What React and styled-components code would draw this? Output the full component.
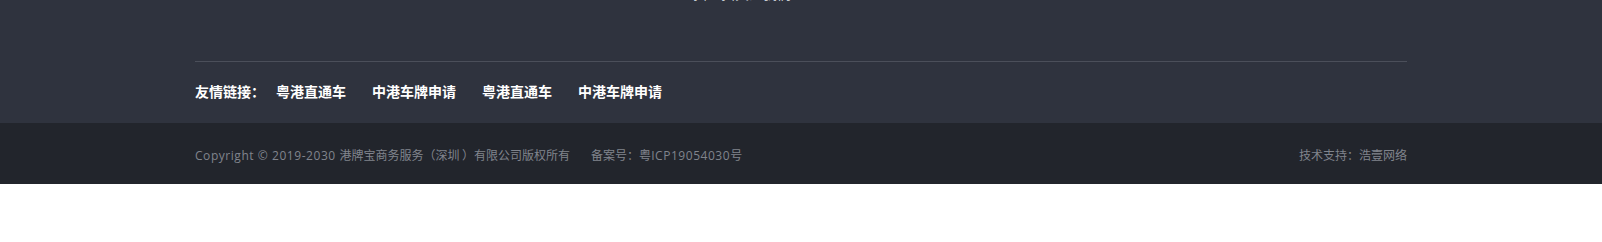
import styled, { createGlobalStyle } from 'styled-components';

const GlobalStyle = createGlobalStyle`
  html, body {
    margin: 0;
    padding: 0;
    background: #ffffff;
    font-family: "Noto Sans CJK SC", "Noto Sans", sans-serif;
  }
`;

const FooterTop = styled.div`
  background: #2f333e;
  overflow: hidden;
`;

const Container = styled.div`
  width: 1212px;
  margin: 0 auto;
`;

const CutLine = styled.div`
  margin-top: -17px;
  margin-bottom: 58px;
  padding-left: 498px;
  height: 20px;
  font-size: 14px;
  line-height: 20px;
  color: #c9ccd3;
`;

const Divider = styled.div`
  border-top: 1px solid #4b4f5a;
`;

const LinksRow = styled.div`
  height: 61px;
  display: flex;
  align-items: center;
  font-size: 14px;
  font-weight: 700;
  color: #ffffff;
  padding-bottom: 3px;
  box-sizing: border-box;
`;

const Label = styled.span`
  margin-right: 11px;
`;

const LinkItem = styled.a`
  color: #ffffff;
  text-decoration: none;
  margin-right: 26px;
`;

const FooterBottom = styled.div`
  background: #22252c;
`;

const BottomRow = styled.div`
  height: 61px;
  display: flex;
  align-items: center;
  justify-content: space-between;
  font-family: "Noto Sans CJK SC", sans-serif;
  font-size: 12px;
  color: #80848d;
  padding-top: 2px;
  box-sizing: border-box;
`;

const Latin = styled.span`
  font-family: "Open Sans", "Noto Sans", sans-serif;
  letter-spacing: 0.55px;
`;

const Left = styled.div`
  display: flex;
  gap: 21px;
`;

const links = ['粤港直通车', '中港车牌申请', '粤港直通车', '中港车牌申请'];

export default function App() {
  return (
    <>
      <GlobalStyle />
      <FooterTop>
        <Container>
          <CutLine>扫一扫关注我们</CutLine>
          <Divider />
          <LinksRow>
            <Label>友情链接：</Label>
            {links.map((l, i) => (
              <LinkItem key={i} href="#">{l}</LinkItem>
            ))}
          </LinksRow>
        </Container>
      </FooterTop>
      <FooterBottom>
        <Container>
          <BottomRow>
            <Left>
              <span><Latin>Copyright © 2019-2030 </Latin>港牌宝商务服务（深圳 ）有限公司版权所有</span>
              <span>备案号：粤<Latin>ICP19054030</Latin>号</span>
            </Left>
            <span>技术支持：浩壹网络</span>
          </BottomRow>
        </Container>
      </FooterBottom>
    </>
  );
}
